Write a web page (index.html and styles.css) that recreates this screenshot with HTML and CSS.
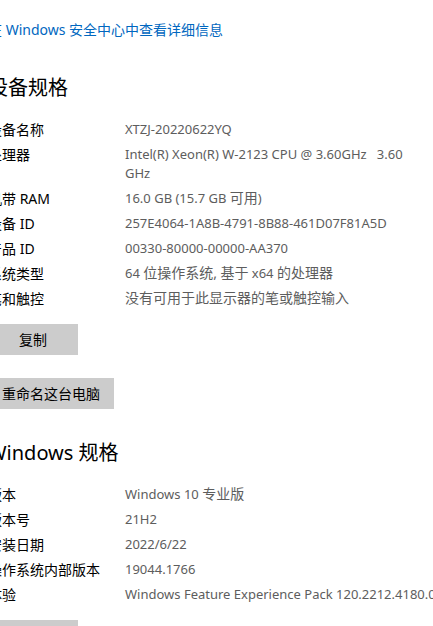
FILE: index.html
```html
<!DOCTYPE html>
<html lang="zh-CN">
<head>
<meta charset="utf-8">
<title>关于</title>
<link rel="stylesheet" href="styles.css">
</head>
<body>
<main class="page">
  <a class="link" href="#">在 Windows 安全中心中查看详细信息</a>

  <h2 class="heading heading-device">设备规格</h2>
  <dl class="specs">
    <dt>设备名称</dt><dd>XTZJ-20220622YQ</dd>
    <dt>处理器</dt><dd>Intel(R) Xeon(R) W-2123 CPU @ 3.60GHz&nbsp;&nbsp; 3.60 GHz</dd>
    <dt>机带 RAM</dt><dd>16.0 GB (15.7 GB <span class="cjk">可用</span>)</dd>
    <dt>设备 ID</dt><dd>257E4064-1A8B-4791-8B88-461D07F81A5D</dd>
    <dt>产品 ID</dt><dd>00330-80000-00000-AA370</dd>
    <dt>系统类型</dt><dd>64 <span class="cjk">位操作系统,</span> <span class="cjk">基于</span> x64 <span class="cjk">的处理器</span></dd>
    <dt>笔和触控</dt><dd><span class="cjk">没有可用于此显示器的笔或触控输入</span></dd>
  </dl>
  <button class="btn btn-copy" type="button">复制</button>
  <button class="btn btn-rename" type="button">重命名这台电脑</button>

  <h2 class="heading heading-windows">Windows 规格</h2>
  <dl class="specs">
    <dt>版本</dt><dd>Windows 10 <span class="cjk">专业版</span></dd>
    <dt>版本号</dt><dd>21H2</dd>
    <dt>安装日期</dt><dd>2022/6/22</dd>
    <dt>操作系统内部版本</dt><dd>19044.1766</dd>
    <dt>体验</dt><dd class="nowrap">Windows Feature Experience Pack 120.2212.4180.0</dd>
  </dl>
  <button class="btn btn-copy" type="button">复制</button>
</main>
</body>
</html>
```

FILE: styles.css
```css
html, body {
  margin: 0;
  padding: 0;
  background: #ffffff;
  overflow: hidden;
}

body {
  width: 433px;
  height: 626px;
  font-family: "Noto Sans", "Noto Sans CJK SC", sans-serif;
  font-size: 14px;
  line-height: 19px;
  color: #000000;
}

.page {
  display: flex;
  flex-direction: column;
  align-items: flex-start;
  margin-left: -12px;
  padding-top: 20px;
  width: 445px;
}

.link {
  color: #0067c0;
  text-decoration: none;
  white-space: nowrap;
}

.heading {
  margin: 0;
  font-size: 20px;
  line-height: 28px;
  font-weight: 400;
  color: #000000;
  white-space: nowrap;
}

.heading-device {
  margin-top: 35px;
}

.heading-windows {
  margin-top: 30px;
}

.specs {
  display: grid;
  grid-template-columns: 137px 300px;
  row-gap: 6px;
  margin: 18px 0 0 0;
}

.specs dt {
  margin: 0;
  white-space: nowrap;
}

.specs dd {
  margin: 0;
  font-size: 13px;
  color: #5d5d5d;
}

.specs dd .cjk {
  font-size: 14px;
  line-height: 1;
}

.specs dd.nowrap {
  white-space: nowrap;
}

.btn {
  font-family: "Noto Sans", "Noto Sans CJK SC", sans-serif;
  font-size: 14px;
  line-height: 19px;
  color: #000000;
  background: #cccccc;
  border: none;
  border-radius: 0;
  height: 31px;
  padding: 0 14px;
}

.btn-copy {
  min-width: 90px;
  margin-top: 16px;
}

.btn-rename {
  margin-top: 23px;
}
```
